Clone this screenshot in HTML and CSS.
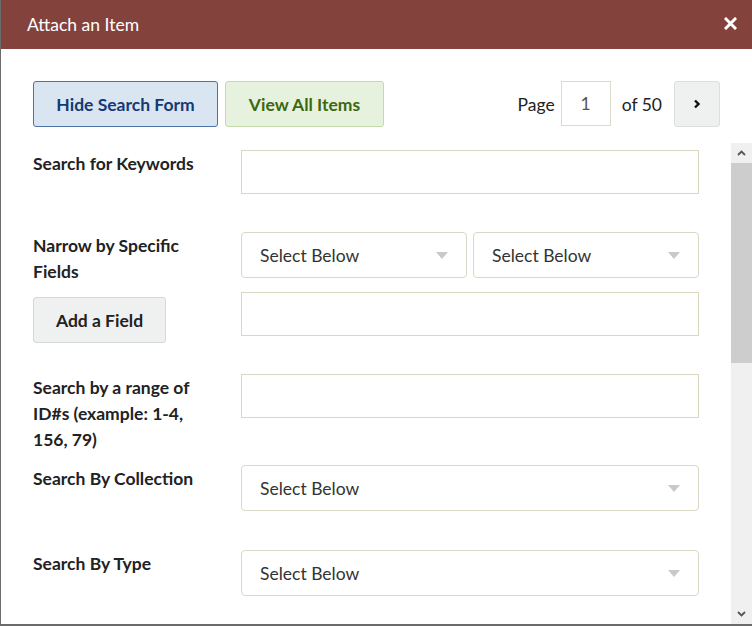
FILE: index.html
```html
<!DOCTYPE html>
<html lang="en">
<head>
<meta charset="utf-8">
<title>Attach an Item</title>
<link rel="stylesheet" href="styles.css">
</head>
<body>
<div class="dialog">
  <header class="dlg-head">
    <h1 class="dlg-title">Attach an Item</h1>
    <button class="dlg-close" type="button" aria-label="Close">
      <svg width="13" height="13" viewBox="0 0 13 13"><path d="M2 2 L11 11 M11 2 L2 11" stroke="#fff" stroke-width="3" stroke-linecap="square" fill="none"/></svg>
    </button>
  </header>

  <div class="toolbar">
    <div class="toolbar-left">
      <button class="btn btn-blue" type="button">Hide Search Form</button>
      <button class="btn btn-green" type="button">View All Items</button>
    </div>
    <div class="pager">
      <span class="pager-text">Page</span>
      <input class="pager-input" type="text" value="1">
      <span class="pager-text of">of 50</span>
      <button class="btn-next" type="button" aria-label="Next page">
        <svg width="8" height="10" viewBox="0 0 8 10"><path d="M2 1.5 L5.5 5 L2 8.5" stroke="#111" stroke-width="2.4" fill="none"/></svg>
      </button>
    </div>
  </div>

  <div class="dlg-body">
    <div class="scroll-content">
      <div class="group">
        <div class="col-label">
          <label class="lbl">Search for Keywords</label>
        </div>
        <div class="col-field">
          <input class="txt" type="text">
        </div>
      </div>

      <div class="group">
        <div class="col-label">
          <label class="lbl">Narrow by Specific Fields</label>
          <button class="btn btn-gray" type="button">Add a Field</button>
        </div>
        <div class="col-field">
          <div class="sel-row">
            <div class="sel"><span>Select Below</span><i class="caret"></i></div>
            <div class="sel"><span>Select Below</span><i class="caret"></i></div>
          </div>
          <input class="txt" type="text">
        </div>
      </div>

      <div class="group">
        <div class="col-label">
          <label class="lbl">Search by a range of ID#s (example: 1-4, 156, 79)</label>
        </div>
        <div class="col-field">
          <input class="txt" type="text">
        </div>
      </div>

      <div class="group">
        <div class="col-label">
          <label class="lbl">Search By Collection</label>
        </div>
        <div class="col-field">
          <div class="sel sel-full"><span>Select Below</span><i class="caret"></i></div>
        </div>
      </div>

      <div class="group">
        <div class="col-label">
          <label class="lbl">Search By Type</label>
        </div>
        <div class="col-field">
          <div class="sel sel-full"><span>Select Below</span><i class="caret"></i></div>
        </div>
      </div>
    </div>

    <div class="scrollbar">
      <div class="sb-btn">
        <svg width="9" height="6" viewBox="0 0 9 6"><path d="M1 5 L4.5 1.5 L8 5" stroke="#555" stroke-width="1.8" fill="none"/></svg>
      </div>
      <div class="sb-thumb"></div>
      <div class="sb-track"></div>
      <div class="sb-btn">
        <svg width="9" height="6" viewBox="0 0 9 6"><path d="M1 1 L4.5 4.5 L8 1" stroke="#555" stroke-width="1.8" fill="none"/></svg>
      </div>
    </div>
  </div>
</div>
</body>
</html>
```

FILE: styles.css
```css
* { box-sizing: border-box; }

html, body {
  margin: 0;
  padding: 0;
  background: #fff;
}

body {
  font-family: Lato, "Open Sans", "Liberation Sans", sans-serif;
  font-size: 17.5px;
  color: #222;
  width: 752px;
  height: 626px;
  overflow: hidden;
}

.dialog {
  width: 752px;
  height: 626px;
  display: flex;
  flex-direction: column;
  border-left: 1px solid #6b6b6b;
  border-bottom: 2px solid #6b6b6b;
  background: #fff;
}

.dlg-head {
  height: 49px;
  flex: none;
  background: #84423d;
  display: flex;
  align-items: center;
  justify-content: space-between;
  padding: 0 14px 0 26px;
}

.dlg-title {
  margin: 0;
  font-size: 17.5px;
  font-weight: 400;
  color: #fff;
  line-height: 1;
  padding-top: 1px;
}

.dlg-close {
  border: 0;
  background: transparent;
  padding: 0;
  width: 16px;
  height: 16px;
  display: flex;
  align-items: center;
  justify-content: center;
  margin-bottom: 2px;
}

.toolbar {
  flex: none;
  display: flex;
  justify-content: space-between;
  align-items: center;
  padding: 32px 32px 0 32px;
  height: 78px;
  margin-bottom: 16px;
}

.toolbar-left {
  display: flex;
  gap: 7px;
}

.btn {
  font-family: inherit;
  font-size: 17.5px;
  font-weight: 700;
  height: 46px;
  border-radius: 3px;
  padding: 0;
  cursor: pointer;
}

.btn-blue {
  background: #dae5f2;
  border: 1px solid #4d72a6;
  color: #153a72;
  width: 185px;
}

.btn-green {
  background: #e7f2de;
  border: 1px solid #c3dbab;
  color: #3c680f;
  width: 159px;
}

.btn-gray {
  background: #eff1f0;
  border: 1px solid #d5d8d5;
  color: #222;
  width: 133px;
}

.pager {
  display: flex;
  align-items: center;
}

.pager-text {
  color: #222;
}

.pager-input {
  width: 50px;
  height: 45px;
  margin: 0 11px 1px 6px;
  border: 1px solid #dcdac8;
  font-family: inherit;
  font-size: 17.5px;
  text-align: center;
  color: #555;
  padding: 0;
  outline: none;
}

.pager-text.of {
  margin-right: 12px;
}

.btn-next {
  width: 46px;
  height: 46px;
  background: #eff1f1;
  border: 1px solid #dcdedd;
  border-radius: 3px;
  display: flex;
  align-items: center;
  justify-content: center;
  padding: 0;
}

.dlg-body {
  flex: 1;
  display: flex;
  min-height: 0;
}

.scroll-content {
  flex: 1;
  padding: 7px 0 0 32px;
  overflow: hidden;
}

.group {
  display: flex;
  align-items: flex-start;
}

.col-label {
  width: 208px;
  flex: none;
  padding-right: 26px;
  display: flex;
  flex-direction: column;
  align-items: flex-start;
}

.lbl {
  display: block;
  font-weight: 700;
  line-height: 26px;
  margin-top: 1px;
  margin-bottom: 12px;
  color: #222;
}

.col-field {
  width: 458px;
  flex: none;
  display: flex;
  flex-direction: column;
}

.txt {
  display: block;
  width: 100%;
  height: 44px;
  border: 1px solid #d9d6c1;
  border-radius: 0;
  margin: 0 0 38px;
  padding: 0 18px;
  font-family: inherit;
  font-size: 17.5px;
  outline: none;
}

.sel-row {
  display: flex;
  gap: 6px;
  margin-bottom: 14px;
}

.sel {
  flex: 1;
  height: 46px;
  border: 1px solid #dbd8c5;
  border-radius: 4px;
  display: flex;
  align-items: center;
  justify-content: space-between;
  padding: 0 18px 0 18px;
  color: #333;
  background: #fff;
}

.sel-full {
  flex: none;
  margin-bottom: 39px;
}

.caret {
  width: 0;
  height: 0;
  border-left: 6px solid transparent;
  border-right: 6px solid transparent;
  border-top: 7px solid #c9c9c9;
  margin-top: 1px;
}

.scrollbar {
  width: 21px;
  flex: none;
  display: flex;
  flex-direction: column;
  background: #f0f0f0;
}

.sb-btn {
  height: 20px;
  flex: none;
  display: flex;
  align-items: center;
  justify-content: center;
}

.sb-thumb {
  height: 200px;
  flex: none;
  background: #cdcdcd;
}

.sb-track {
  flex: 1;
}
```
